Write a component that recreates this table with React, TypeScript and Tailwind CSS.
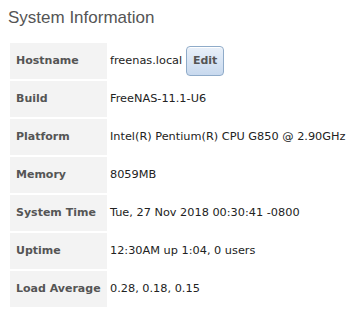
const rows: [string, string][] = [
  ["Build", "FreeNAS-11.1-U6"],
  ["Platform", "Intel(R) Pentium(R) CPU G850 @ 2.90GHz"],
  ["Memory", "8059MB"],
  ["System Time", "Tue, 27 Nov 2018 00:30:41 -0800"],
  ["Uptime", "12:30AM up 1:04, 0 users"],
  ["Load Average", "0.28, 0.18, 0.15"],
]

function Label({ children }: { children: string }) {
  return (
    <td className="w-[97px] h-[36px] bg-[#f3f3f3] pl-[6px] pr-0 align-middle font-bold text-[11px] text-[#555]">
      {children}
    </td>
  )
}

export default function App() {
  return (
    <div className="w-[357px] h-[313px] bg-white overflow-hidden font-['DejaVu_Sans',sans-serif] text-[11.3px] text-[#222]">
      <h2 className="pl-[8px] pt-[6px] h-[41px] font-['Liberation_Sans',Arial,sans-serif] text-[17px] leading-[24px] text-[#555]">
        System Information
      </h2>
      <table className="ml-[10px] border-separate border-spacing-x-0 border-spacing-y-[2px]">
        <tbody>
          <tr>
            <Label>Hostname</Label>
            <td className="pl-[3px] align-middle">
              <div className="flex items-center gap-[4px]">
                <span>freenas.local</span>
                <button className="w-[38px] h-[30px] rounded-[4px] border border-[#8fabc9] bg-gradient-to-b from-[#e9f0f9] to-[#c8d9ee] font-bold text-[#555] text-[11px] shadow-[inset_0_1px_0_#fff]">
                  Edit
                </button>
              </div>
            </td>
          </tr>
          {rows.map(([label, value]) => (
            <tr key={label}>
              <Label>{label}</Label>
              <td className="pl-[3px] align-middle whitespace-nowrap">{value}</td>
            </tr>
          ))}
        </tbody>
      </table>
    </div>
  )
}
